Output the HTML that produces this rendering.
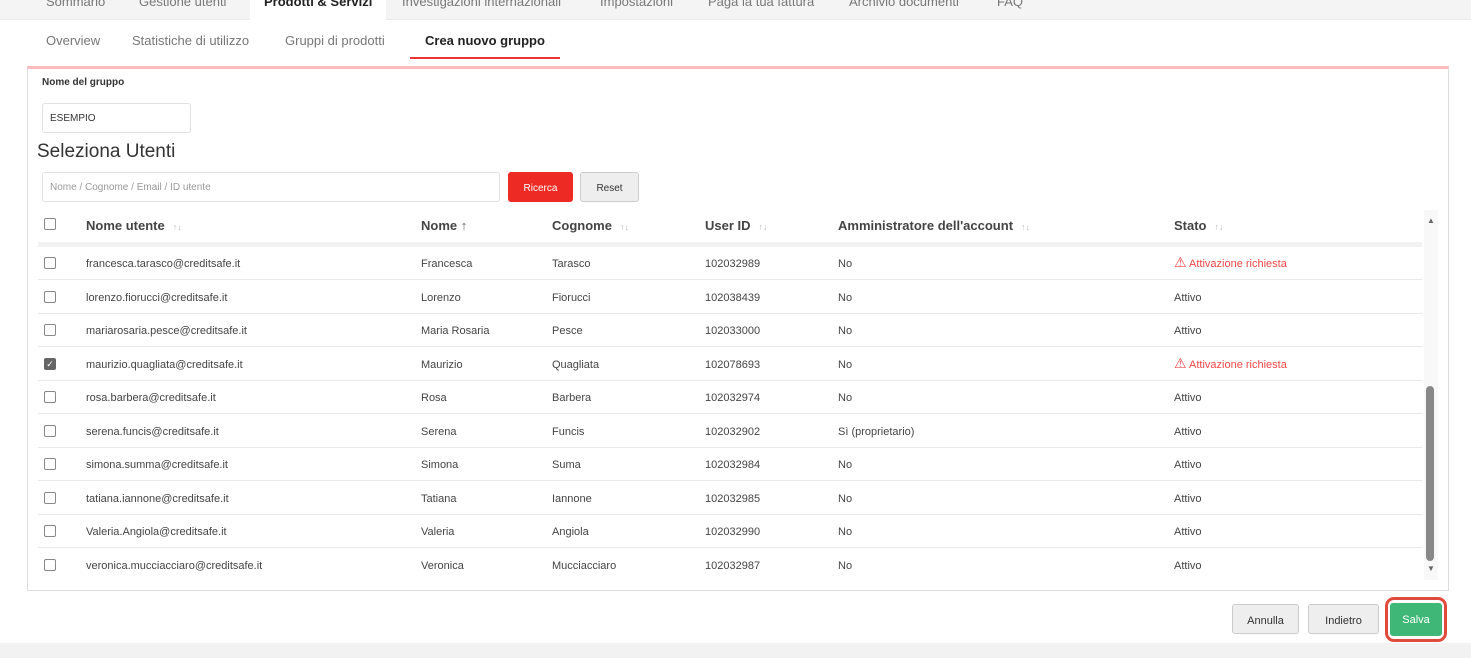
<!DOCTYPE html>
<html><head><meta charset="utf-8"><style>
*{margin:0;padding:0;box-sizing:border-box}
body{width:1471px;height:658px;background:#fff;font-family:"Liberation Sans",sans-serif;position:relative;overflow:hidden;color:#333}
.a{position:absolute;white-space:nowrap}
.top{left:0;top:0;width:1471px;height:20px;background:#f4f4f4;border-bottom:1px solid #ececec}
.tn{top:-6px;font-size:13px;color:#777}
.sub{top:33px;font-size:13px;color:#777}
.panel{left:27px;top:66px;width:1422px;height:525px;border:1px solid #ddd;border-top:3px solid #fbb}
.th{top:217px;font-size:13px;font-weight:bold;color:#444}
.s{font-size:9px;color:#bbb;margin-left:8px;font-weight:normal}
.td{font-size:11px;color:#444}
.cb{width:12px;height:12px;border:1px solid #888;border-radius:2px;background:#fff}
.line{left:38px;width:1384px;height:1px;background:#e8e8e8}
.btn{height:30px;border:1px solid #ccc;background:#eee;border-radius:3px;font-size:11px;color:#333;text-align:center;line-height:28px;padding-top:2px}
.red{color:#f04848}
</style></head><body>
<div class="a top"></div>
<div class="a" style="left:250px;top:0;width:136px;height:22px;background:#fff"></div>
<div class="a tn" style="left:46px">Sommario</div>
<div class="a tn" style="left:139px">Gestione utenti</div>
<div class="a tn" style="left:264px;color:#222;font-weight:bold">Prodotti &amp; Servizi</div>
<div class="a tn" style="left:402px">Investigazioni internazionali</div>
<div class="a tn" style="left:600px">Impostazioni</div>
<div class="a tn" style="left:708px">Paga la tua fattura</div>
<div class="a tn" style="left:849px">Archivio documenti</div>
<div class="a tn" style="left:997px">FAQ</div>
<div class="a sub" style="left:46px">Overview</div>
<div class="a sub" style="left:132px">Statistiche di utilizzo</div>
<div class="a sub" style="left:285px">Gruppi di prodotti</div>
<div class="a sub" style="left:425px;color:#222;font-weight:bold">Crea nuovo gruppo</div>
<div class="a" style="left:410px;top:57px;width:150px;height:2px;background:#e33"></div>
<div class="a panel"></div>
<div class="a" style="left:42px;top:77px;font-size:10px;font-weight:bold;color:#333">Nome del gruppo</div>
<div class="a" style="left:42px;top:103px;width:149px;height:30px;border:1px solid #e2e2e2;border-radius:3px;font-size:10px;padding:9px 7px;color:#333">ESEMPIO</div>
<div class="a" style="left:37px;top:141px;font-size:19px;color:#333">Seleziona Utenti</div>
<div class="a" style="left:42px;top:172px;width:458px;height:30px;border:1px solid #e2e2e2;border-radius:3px;font-size:10px;padding:9px 7px;color:#999">Nome / Cognome / Email / ID utente</div>
<div class="a btn" style="left:508px;top:172px;width:65px;background:#ee2a24;border-color:#ee2a24;color:#fff;font-size:10px">Ricerca</div>
<div class="a btn" style="left:580px;top:172px;width:59px;font-size:10px">Reset</div>
<div class="a cb" style="left:44px;top:218px"></div>
<div class="a th" style="left:86px;top:218px">Nome utente<span class="s">↑↓</span></div>
<div class="a th" style="left:421px;top:218px">Nome <span style="font-weight:normal;color:#666">↑</span></div>
<div class="a th" style="left:552px;top:218px">Cognome<span class="s">↑↓</span></div>
<div class="a th" style="left:705px;top:218px">User ID<span class="s">↑↓</span></div>
<div class="a th" style="left:838px;top:218px">Amministratore dell'account<span class="s">↑↓</span></div>
<div class="a th" style="left:1174px;top:218px">Stato<span class="s">↑↓</span></div>
<div class="a" style="left:38px;top:242px;width:1384px;height:5px;background:#f3f3f3"></div>
<div class="a" style="left:1424px;top:210px;width:14px;height:370px;background:#f8f8f8"></div>
<div class="a" style="left:1427px;top:216px;font-size:8px;color:#666">▲</div>
<div class="a" style="left:1427px;top:564px;font-size:8px;color:#666">▼</div>
<div class="a" style="left:1426px;top:386px;width:8px;height:175px;background:#888;border-radius:4px"></div>
<div id="rows"></div>
<div class="a btn" style="left:1232px;top:604px;width:67px">Annulla</div>
<div class="a btn" style="left:1308px;top:604px;width:71px">Indietro</div>
<div class="a" style="left:1385px;top:597px;width:62px;height:45px;border:3px solid #e04b3c;border-radius:9px"></div>
<div class="a btn" style="left:1390px;top:603px;width:52px;height:33px;background:#3fb877;border-color:#3fb877;color:#fff;line-height:29px">Salva</div>
<div class="a" style="left:0;top:643px;width:1471px;height:15px;background:#f2f2f2"></div>
<script>
var d=[["francesca.tarasco","Francesca","Tarasco","102032989","No",1],["lorenzo.fiorucci","Lorenzo","Fiorucci","102038439","No",0],["mariarosaria.pesce","Maria Rosaria","Pesce","102033000","No",0],["maurizio.quagliata","Maurizio","Quagliata","102078693","No",1,1],["rosa.barbera","Rosa","Barbera","102032974","No",0],["serena.funcis","Serena","Funcis","102032902","Sì (proprietario)",0],["simona.summa","Simona","Suma","102032984","No",0],["tatiana.iannone","Tatiana","Iannone","102032985","No",0],["Valeria.Angiola","Valeria","Angiola","102032990","No",0],["veronica.mucciacciaro","Veronica","Mucciacciaro","102032987","No",0]];
var h="";d.forEach(function(r,i){var y=263+i*33.5;var t=y-5;
h+='<div class="a cb" style="left:44px;top:'+(y-6)+'px;'+(r[6]?'background:#666;border-color:#666;color:#fff;font-size:9px;line-height:10px;text-align:center':'')+'">'+(r[6]?'✓':'')+'</div>';
h+='<div class="a td" style="left:86px;top:'+t+'px">'+r[0]+'@creditsafe.it</div>';
h+='<div class="a td" style="left:421px;top:'+t+'px">'+r[1]+'</div>';
h+='<div class="a td" style="left:552px;top:'+t+'px">'+r[2]+'</div>';
h+='<div class="a td" style="left:705px;top:'+t+'px">'+r[3]+'</div>';
h+='<div class="a td" style="left:838px;top:'+t+'px">'+r[4]+'</div>';
h+=r[5]?'<div class="a td red" style="left:1174px;top:'+(t-4)+'px"><span style="font-size:14px">⚠</span> Attivazione richiesta</div>':'<div class="a td" style="left:1174px;top:'+t+'px">Attivo</div>';
if(i<9)h+='<div class="a line" style="top:'+Math.round(y+16)+'px"></div>';});
document.getElementById("rows").innerHTML=h;
</script>
</body></html>
